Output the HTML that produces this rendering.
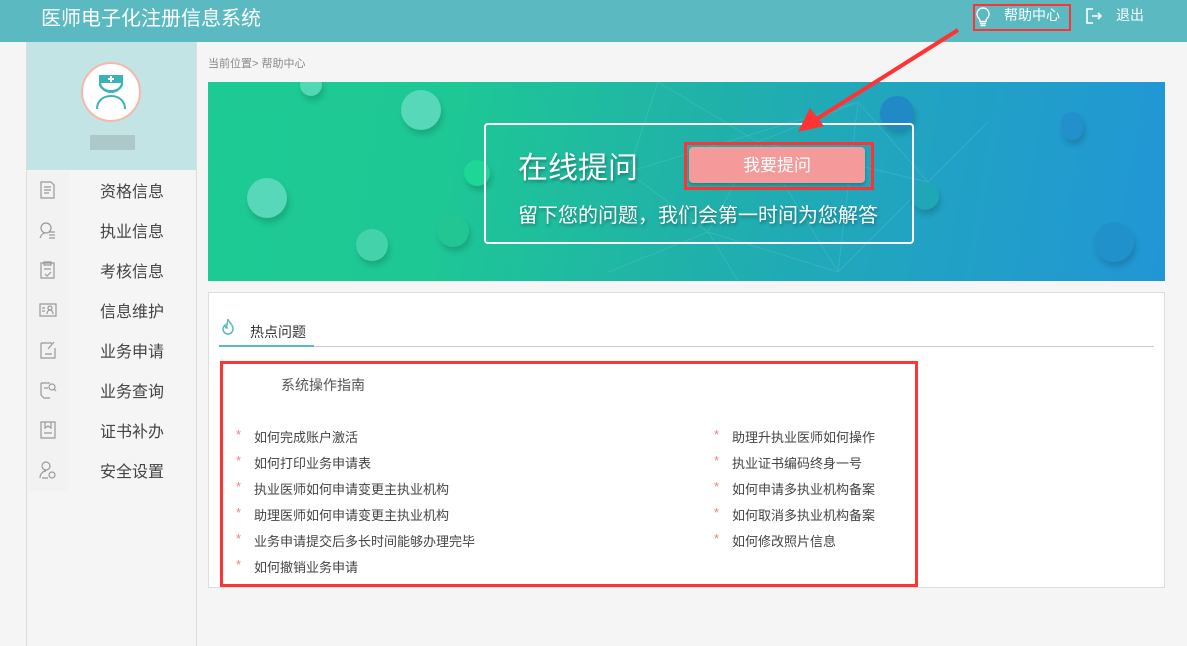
<!DOCTYPE html>
<html><head><meta charset="utf-8"><style>
*{margin:0;padding:0;box-sizing:border-box}
body{width:1187px;height:646px;overflow:hidden;background:#f5f5f5;font-family:"Liberation Sans","Noto Sans CJK SC",sans-serif;position:relative}
.abs{position:absolute}
.hdr{left:0;top:0;width:1187px;height:42px;background:#5bbac1}
.menu div.it{position:absolute;left:27px;width:169px;height:40px;}
.menu .ic{position:absolute;left:0;top:0;width:42px;height:40px;background:#f2f2f2}
.menu .tx{position:absolute;left:73px;top:7px;font-size:16px;color:#444}
.q{position:absolute;font-size:13px;color:#444}
.q b{position:absolute;left:-18px;color:#f08080;font-weight:normal}
.c{position:absolute;border-radius:50%;box-shadow:2px 5px 6px rgba(0,0,0,.15)}
</style></head><body>
<div class="abs hdr"></div>
<div class="abs" style="left:41px;top:2px;font-size:20px;color:#fff">医师电子化注册信息系统</div>
<svg class="abs" style="left:973px;top:6px" width="20" height="22" viewBox="0 0 20 22"><path d="M10 2a6 6 0 0 0-4 10.5c1 1 1 2 1 3h6c0-1 0-2 1-3A6 6 0 0 0 10 2z M7 17.5h6 M7.5 19.5h5" fill="none" stroke="#fff" stroke-width="1.4"/></svg>
<div class="abs" style="left:1004px;top:5px;font-size:14px;color:#fff">帮助中心</div>
<div class="abs" style="left:973px;top:4px;width:98px;height:27px;border:2px solid #f33"></div>
<svg class="abs" style="left:1085px;top:7px" width="18" height="18" viewBox="0 0 18 18"><path d="M8 2H2v14h6 M7 9h9 M13 6l3 3-3 3" fill="none" stroke="#fff" stroke-width="1.6"/></svg>
<div class="abs" style="left:1116px;top:5px;font-size:14px;color:#fff">退出</div>

<div class="abs" style="left:26px;top:42px;width:171px;height:604px;background:#f5f5f5;border-left:1px solid #ddd;border-right:1px solid #ddd"></div>
<div class="abs" style="left:27px;top:42px;width:169px;height:128px;background:#c2e4e4"></div>
<div class="abs" style="left:81px;top:62px;width:60px;height:60px;border-radius:50%;background:#fff;border:2px solid #f6b8a8"></div>
<svg class="abs" style="left:94px;top:74px" width="34" height="36" viewBox="0 0 34 36"><path d="M5 1h24v10c-2 5-7 8-12 8S7 16 5 11z" fill="#3bb1b8"/><path d="M7 9h20c-1 5-5 7-10 7s-9-2-10-7z" fill="#fff"/><path d="M14 5h6M17 2v6" stroke="#fff" stroke-width="2"/><path d="M3 35c0-8 6-13 14-13s14 5 14 13" fill="none" stroke="#3bb1b8" stroke-width="2"/></svg>
<div class="abs" style="left:90px;top:135px;width:45px;height:15px;background:#adc8c8"></div>
<div class="menu">
<div class="it" style="top:171px"><div class="ic"></div><div class="tx">资格信息</div></div>
<div class="it" style="top:211px"><div class="ic"></div><div class="tx">执业信息</div></div>
<div class="it" style="top:251px"><div class="ic"></div><div class="tx">考核信息</div></div>
<div class="it" style="top:291px"><div class="ic"></div><div class="tx">信息维护</div></div>
<div class="it" style="top:331px"><div class="ic"></div><div class="tx">业务申请</div></div>
<div class="it" style="top:371px"><div class="ic"></div><div class="tx">业务查询</div></div>
<div class="it" style="top:411px"><div class="ic"></div><div class="tx">证书补办</div></div>
<div class="it" style="top:451px"><div class="ic"></div><div class="tx">安全设置</div></div>
</div>
<svg class="abs" style="left:38px;top:180px" width="20" height="310" fill="none" stroke="#999" stroke-width="1.2">
<path d="M3 2h10l3 3v13H3z M6 7h7M6 10h7M6 13h5"/>
<g transform="translate(0,40)"><circle cx="8" cy="8" r="5"/><path d="M2 18c1-3 3-5 5-5 M11 12h6M11 15h6M11 18h6"/></g>
<g transform="translate(0,80)"><path d="M3 3h13v15H3z M6 2h7v3H6z M6 9h7 M7 14l2 2 4-4"/></g>
<g transform="translate(0,120)"><path d="M2 4h16v12H2z M4 8h3M4 11h3 M9 14c0-3 2-4 3-4s3 1 3 4"/><circle cx="12" cy="8" r="2"/></g>
<g transform="translate(0,160)"><path d="M3 3h11M3 3v15h14V8 M7 14h7 M16 2l-6 7"/></g>
<g transform="translate(0,200)"><path d="M3 3h9M3 3v12l3 3h6 M6 8h4"/><circle cx="14" cy="7" r="3"/><path d="M16 9l2 2"/></g>
<g transform="translate(0,240)"><path d="M3 2h14v16H3z M7 2v6l3-2 3 2V2 M6 13h8"/></g>
<g transform="translate(0,280)"><circle cx="8" cy="6" r="4"/><path d="M2 18c0-4 3-7 6-7 M4 18h6"/><circle cx="14" cy="15" r="3"/></g>
</svg>

<div class="abs" style="left:208px;top:55px;font-size:11px;color:#888">当前位置&gt; 帮助中心</div>

<div class="abs" style="left:208px;top:82px;width:957px;height:199px;overflow:hidden;background:linear-gradient(100deg,#1dca93 0%,#1ec895 25%,#20b2a8 50%,#21a2c4 75%,#2196d6 100%)">
<svg class="abs" style="left:300px;top:0" width="500" height="199" stroke="rgba(255,255,255,.1)" fill="none"><path d="M150 0L250 60L350 20L420 100L330 190L200 150L120 90L150 0 M250 60L200 150 M250 60L330 190 M350 20L330 190 M120 90L350 20 M250 60L420 100 M100 190L200 150L230 199 M420 100L480 40"/></svg>
<div class="c" style="left:92px;top:-8px;width:22px;height:22px;background:#52d8b3"></div>
<div class="c" style="left:193px;top:8px;width:40px;height:40px;background:#57d8b8"></div>
<div class="c" style="left:39px;top:96px;width:40px;height:40px;background:#57d8b8"></div>
<div class="c" style="left:148px;top:147px;width:32px;height:32px;background:#43d2a9"></div>
<div class="c" style="left:229px;top:133px;width:32px;height:32px;background:#22c692"></div>
<div class="c" style="left:256px;top:78px;width:26px;height:26px;background:#1ed696"></div>
<div class="c" style="left:672px;top:14px;width:34px;height:34px;background:#2189c6"></div>
<div class="c" style="left:853px;top:30px;width:22px;height:28px;border-radius:11px;background:#2390cb"></div>
<div class="c" style="left:703px;top:100px;width:28px;height:28px;background:#1fa7b8"></div>
<div class="c" style="left:886px;top:140px;width:40px;height:40px;background:#2191cc"></div>
</div>
<div class="abs" style="left:484px;top:123px;width:430px;height:121px;border:2px solid #fff;border-radius:4px"></div>
<div class="abs" style="left:518px;top:143px;font-size:30px;color:#fff;text-shadow:1px 2px 3px rgba(0,0,0,.35)">在线提问</div>
<div class="abs" style="left:518px;top:199px;font-size:20px;color:#fff;text-shadow:1px 2px 3px rgba(0,0,0,.35)">留下您的问题，我们会第一时间为您解答</div>
<div class="abs" style="left:689px;top:147px;width:176px;height:36px;background:#f49a9a;border-radius:4px;box-shadow:0 2px 3px rgba(0,0,0,.25);color:#fff;font-size:17px;text-align:center;line-height:38px">我要提问</div>
<div class="abs" style="left:684px;top:142px;width:190px;height:48px;border:3px solid #f33"></div>
<svg class="abs" style="left:780px;top:20px" width="200" height="120"><path d="M178 10L32 102" stroke="#f33" stroke-width="4"/><path d="M18 112L30 88L44 106z" fill="#f33"/></svg>

<div class="abs" style="left:208px;top:292px;width:957px;height:296px;background:#fff;border:1px solid #ddd"></div>
<svg class="abs" style="left:219px;top:318px" width="18" height="20" viewBox="0 0 18 20"><path d="M9 1c1 4 5 5 5 10a5 5 0 0 1-10 0c0-2 1-3 2-4 0 2 1 3 2 3-1-4 1-6 1-9z" fill="none" stroke="#5bbac1" stroke-width="1.5"/></svg>
<div class="abs" style="left:250px;top:322px;font-size:14px;color:#333">热点问题</div>
<div class="abs" style="left:219px;top:346px;width:935px;height:1px;background:#ccc"></div>
<div class="abs" style="left:219px;top:345px;width:95px;height:2px;background:#5bbac1"></div>
<div class="abs" style="left:220px;top:361px;width:698px;height:226px;border:3px solid #f33"></div>
<div class="abs" style="left:281px;top:375px;font-size:14px;color:#555">系统操作指南</div>
<div class="q" style="left:254px;top:427px"><b>*</b>如何完成账户激活</div>
<div class="q" style="left:254px;top:453px"><b>*</b>如何打印业务申请表</div>
<div class="q" style="left:254px;top:479px"><b>*</b>执业医师如何申请变更主执业机构</div>
<div class="q" style="left:254px;top:505px"><b>*</b>助理医师如何申请变更主执业机构</div>
<div class="q" style="left:254px;top:531px"><b>*</b>业务申请提交后多长时间能够办理完毕</div>
<div class="q" style="left:254px;top:557px"><b>*</b>如何撤销业务申请</div>
<div class="q" style="left:732px;top:427px"><b>*</b>助理升执业医师如何操作</div>
<div class="q" style="left:732px;top:453px"><b>*</b>执业证书编码终身一号</div>
<div class="q" style="left:732px;top:479px"><b>*</b>如何申请多执业机构备案</div>
<div class="q" style="left:732px;top:505px"><b>*</b>如何取消多执业机构备案</div>
<div class="q" style="left:732px;top:531px"><b>*</b>如何修改照片信息</div>
</body></html>
